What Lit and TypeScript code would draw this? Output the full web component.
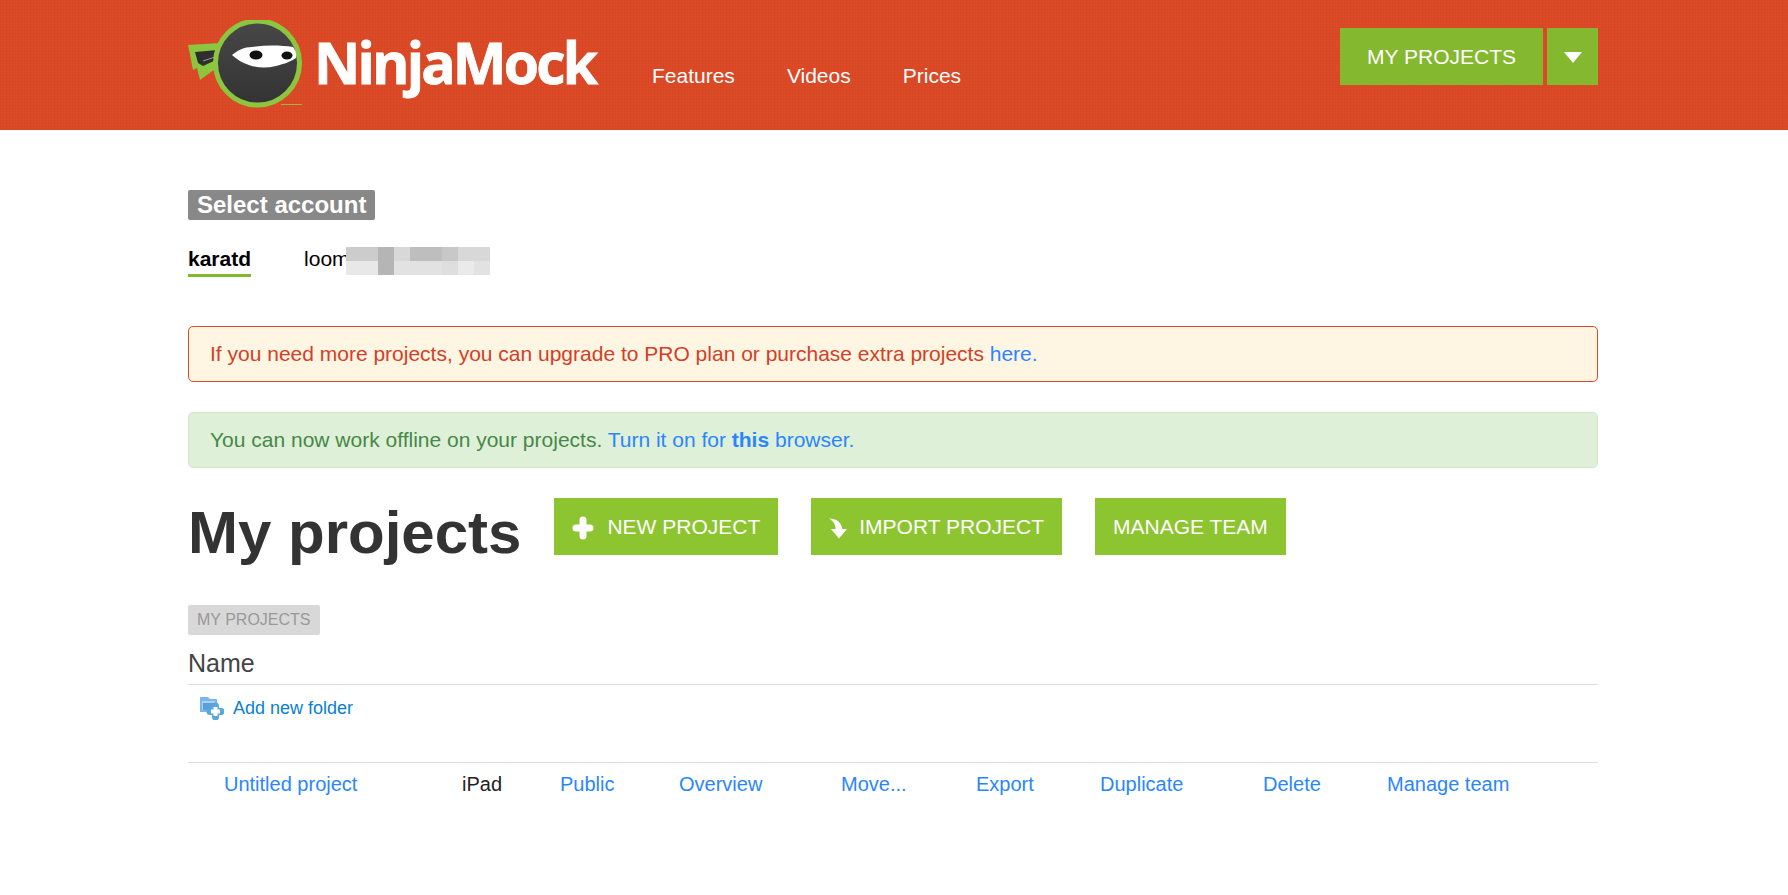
import { css, html, LitElement } from 'lit';
import { customElement } from 'lit/decorators.js';

const ROW_LINKS = ['Public', 'Overview', 'Move...', 'Export', 'Duplicate', 'Delete', 'Manage team'];

@customElement('app-root')
export class AppRoot extends LitElement {
  static override styles = css`
    :host {
      display: block;
      font-family: 'Liberation Sans', Arial, sans-serif;
      color: #333;
      background: #fff;
      min-height: 895px;
    }
    a {
      color: #2a86ff;
      text-decoration: none;
    }
    .header {
      height: 130px;
      background-color: #dc4a27;
      background-image:
        repeating-linear-gradient(0deg, rgba(120, 30, 0, 0.04) 0 1px, transparent 1px 3px),
        repeating-linear-gradient(90deg, rgba(120, 30, 0, 0.04) 0 1px, transparent 1px 3px);
    }
    .wrap {
      width: 1410px;
      margin-left: 188px;
    }
    .header .wrap {
      display: flex;
      height: 100%;
    }
    .logo {
      display: block;
      margin-top: 20px;
      flex: none;
    }
    .logo-text {
      font-family: 'Open Sans', sans-serif;
      font-weight: 700;
      font-size: 57px;
      fill: #fff;
      stroke: #fff;
      stroke-width: 0.8px;
    }
    .nav {
      display: flex;
      gap: 52px;
      margin: 64px 0 0 44px;
      font-size: 21px;
      line-height: 24px;
    }
    .nav a {
      color: #fff;
    }
    .head-btns {
      display: flex;
      gap: 4px;
      margin: 28px 0 0 auto;
      height: 57px;
    }
    .head-btn {
      background: #84b82f;
      color: #fff;
      font-size: 21px;
      line-height: 57px;
      padding: 0 27px;
    }
    .arrow {
      width: 51px;
      display: flex;
      align-items: center;
      justify-content: center;
      background: #84b82f;
    }
    .arrow i {
      width: 0;
      height: 0;
      margin-top: 2px;
      border: 9px solid transparent;
      border-bottom: 0;
      border-top: 11px solid #fff;
    }
    .label {
      display: inline-block;
      background: #888;
      color: #fff;
      font-weight: 700;
      font-size: 24px;
      line-height: 30px;
      padding: 0 9px;
      border-radius: 2px;
    }
    .select {
      margin-top: 60px;
      height: 30px;
    }
    .accounts {
      display: flex;
      gap: 53px;
      margin-top: 25px;
      font-size: 21px;
      color: #000;
      height: 32px;
    }
    .account {
      line-height: 28px;
      height: 32px;
      box-sizing: border-box;
    }
    .account.active {
      font-weight: 700;
      border-bottom: 3px solid #84b82f;
    }
    .masked {
      display: flex;
      line-height: 28px;
    }
    .blur {
      display: grid;
      grid-template-columns: repeat(9, 16px);
      grid-template-rows: repeat(2, 14px);
      margin: 2px 0 0 -4px;
      width: 144px;
    }
    .alert {
      box-sizing: border-box;
      height: 56px;
      line-height: 54px;
      font-size: 21px;
      padding: 0 21px;
      border-radius: 5px;
      border: 1px solid;
    }
    .alert.warn {
      margin-top: 49px;
      background: #fef6e3;
      border-color: #de4a27;
      color: #d33f27;
    }
    .alert.ok {
      margin-top: 30px;
      background: #dff0d8;
      border-color: #d3e6c5;
      color: #468847;
    }
    .title-row {
      display: flex;
      align-items: flex-start;
      margin-top: 30px;
    }
    h1 {
      margin: 0 33px 0 0;
      font-size: 60px;
      line-height: 70px;
      font-weight: 700;
      color: #333;
    }
    .btn {
      display: flex;
      align-items: center;
      gap: 12px;
      height: 57px;
      padding: 0 18px;
      background: #8cc530;
      color: #fff;
      font-size: 21px;
      margin-right: 33px;
    }
    .btn svg {
      flex: none;
      margin-top: 3px;
    }
    .crumb {
      display: inline-block;
      margin-top: 37px;
      background: #d8d8d8;
      color: #999;
      font-size: 16px;
      line-height: 30px;
      padding: 0 9px;
      border-radius: 2px;
      vertical-align: top;
    }
    .name {
      font-size: 25px;
      line-height: 32px;
      color: #444;
      margin-top: 12px;
      padding-bottom: 5px;
      border-bottom: 1px solid #ddd;
    }
    .add {
      display: flex;
      align-items: center;
      gap: 9px;
      padding-left: 12px;
      height: 46px;
      font-size: 18px;
    }
    .add a {
      color: #0a7fd1;
    }
    .table-row {
      display: grid;
      grid-template-columns: 238px 98px 119px 162px 135px 124px 163px 124px auto;
      margin-top: 31px;
      padding: 9px 0 0 36px;
      border-top: 1px solid #ddd;
      font-size: 20px;
      line-height: 24px;
      color: #222;
    }
  `;

  private renderLogo() {
    return html`<svg class="logo" width="420" height="90" viewBox="0 0 420 90">
      <defs>
        <linearGradient id="head" x1="0" y1="0" x2="0" y2="1">
          <stop offset="0" stop-color="#484848" />
          <stop offset="1" stop-color="#333" />
        </linearGradient>
      </defs>
      <path fill="#8cc53f" d="M0 25 L32 23 L30 47 L12 60 L9 48 L5 50 Z" />
      <path fill="#2f2f2f" d="M7 32 L30 30 L28 40 L15 46 L10 43 Z" />
      <path d="M15 41 L27 37" stroke="#9a9a9a" stroke-width="1" />
      <circle cx="69.5" cy="43" r="42" fill="url(#head)" stroke="#8cc53f" stroke-width="5" />
      <path
        fill="#fff"
        d="M44 35 C50 30 56 27 64 27 C78 25 92 25 105 27 C108 31 109 35 108 38 C104 41 96 44 88 46 C72 50 56 46 44 35 Z"
      />
      <ellipse cx="68" cy="35" rx="6.5" ry="4.5" fill="#111" />
      <ellipse cx="99" cy="35.5" rx="5.5" ry="4" fill="#111" />
      <path d="M93 84.5 H114" stroke="#9fb53a" stroke-width="1" />
      <text class="logo-text" x="126" y="64" textLength="284" lengthAdjust="spacing">NinjaMock</text>
    </svg>`;
  }

  private renderBlur() {
    const cells = [
      '#ccc', '#ccc', '#b5b5b5', '#d8d8d8', '#bebebe', '#bebebe', '#c8c8c8', '#d8d8d8', '#d8d8d8',
      '#e8e8e8', '#e8e8e8', '#b5b5b5', '#e2e2e2', '#e2e2e2', '#e2e2e2', '#dedede', '#eaeaea', '#e2e2e2',
    ];
    return html`<span class="blur">
      ${cells.map((c) => html`<span style="background:${c}"></span>`)}
    </span>`;
  }

  override render() {
    return html`
      <div class="header">
        <div class="wrap">
          ${this.renderLogo()}
          <nav class="nav">
            <a href="#">Features</a>
            <a href="#">Videos</a>
            <a href="#">Prices</a>
          </nav>
          <div class="head-btns">
            <a class="head-btn" href="#">MY PROJECTS</a>
            <a class="arrow" href="#"><i></i></a>
          </div>
        </div>
      </div>
      <div class="wrap">
        <div class="select"><span class="label">Select account</span></div>
        <div class="accounts">
          <span class="account active">karatd</span>
          <span class="masked">loom${this.renderBlur()}</span>
        </div>
        <div class="alert warn">
          If you need more projects, you can upgrade to PRO plan or purchase extra projects
          <a href="#">here.</a>
        </div>
        <div class="alert ok">
          You can now work offline on your projects.
          <a href="#">Turn it on for <b>this</b> browser.</a>
        </div>
        <div class="title-row">
          <h1>My projects</h1>
          <a class="btn" href="#">
            <svg width="23" height="24" viewBox="0 0 23 24">
              <path d="M11 4v16M4 12h14" stroke="#fff" stroke-width="7" stroke-linecap="round" />
            </svg>
            NEW PROJECT
          </a>
          <a class="btn" href="#">
            <svg width="18" height="22" viewBox="0 0 19 22">
              <path fill="#fff" d="M0 1 C8 1 13 5 14 12 H19 L10.5 22 L2 12 H7 C7 8 5 4 0 1 Z" />
            </svg>
            IMPORT PROJECT
          </a>
          <a class="btn" href="#">MANAGE TEAM</a>
        </div>
        <span class="crumb">MY PROJECTS</span>
        <div class="name">Name</div>
        <div class="add">
          <svg width="24" height="24" viewBox="0 0 24 24">
            <path fill="#7ab8e8" d="M0 1h8l2 2h7v13H0z" />
            <path fill="#a9d2f2" d="M2 5h13v9H2z" />
            <path fill="#5b9fd8" d="M3 7h12v7H3z" />
            <path d="M15.5 10v11M10 15.5h11" stroke="#5aa7de" stroke-width="7" stroke-linecap="round" />
            <path d="M15.5 11v9M11 15.5h9" stroke="#fff" stroke-width="4" />
          </svg>
          <a href="#">Add new folder</a>
        </div>
        <div class="table-row">
          <a href="#">Untitled project</a>
          <span>iPad</span>
          ${ROW_LINKS.map((l) => html`<a href="#">${l}</a>`)}
        </div>
      </div>
    `;
  }
}

declare global {
  interface HTMLElementTagNameMap {
    'app-root': AppRoot;
  }
}
